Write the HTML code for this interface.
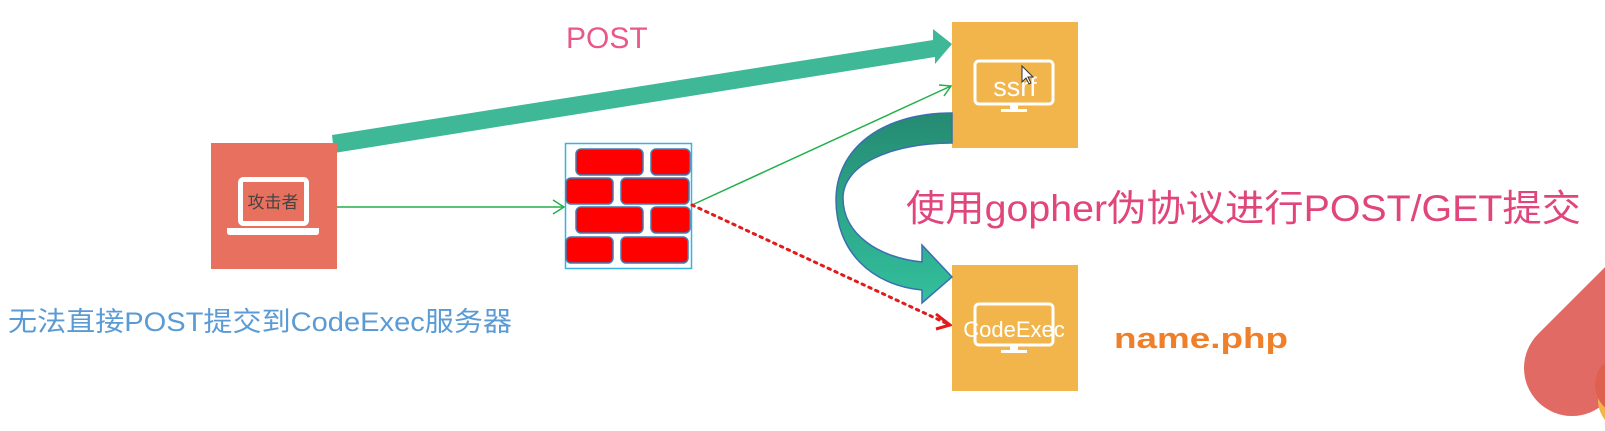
<!DOCTYPE html>
<html><head><meta charset="utf-8"><style>
html,body{margin:0;padding:0;background:#fff;width:1605px;height:431px;overflow:hidden}
text{font-family:"Liberation Sans","Noto Sans CJK SC",sans-serif}
</style></head><body>
<svg width="1605" height="431" viewBox="0 0 1605 431" xmlns="http://www.w3.org/2000/svg">
<defs>
<linearGradient id="cg" x1="0" y1="0" x2="0" y2="1">
<stop offset="0" stop-color="#258a72"/><stop offset="1" stop-color="#33c09d"/>
</linearGradient>
</defs>
<!-- bottom right decoration -->
<g transform="translate(1572,368) rotate(-45)">
<rect x="-48" y="-48" width="260" height="96" rx="48" fill="#e26a64"/>
</g>
<circle cx="1630" cy="400" r="32" fill="#f2b54b"/>
<circle cx="1625" cy="385" r="30" fill="#e0604f"/>

<!-- thick arrow -->
<polygon points="332,135 933,40 933,29 952,44 935,64 935,57 334,153" fill="#3fb897"/>

<!-- attacker -->
<rect x="211" y="143" width="126" height="126" fill="#e8705f"/>
<rect x="240.5" y="179.5" width="66" height="44" rx="3" fill="none" stroke="#fff" stroke-width="5"/>
<path d="M227 228 H319 V232 Q319 235 316 235 H230 Q227 235 227 232 Z" fill="#fff"/>
<text x="273" y="208" font-size="17" fill="#444" text-anchor="middle">攻击者</text>

<!-- green line -->
<line x1="337" y1="207" x2="564" y2="207" stroke="#22b04a" stroke-width="1.5"/>
<polyline points="553,200 564,207 553,214" fill="none" stroke="#22b04a" stroke-width="1.5"/>

<!-- wall -->
<rect x="565.5" y="143.5" width="126" height="125" fill="#fff" stroke="#36b2e3" stroke-width="1.5"/>
<g fill="#ff0000" stroke="#3f7db5" stroke-width="1.5">
<rect x="576" y="149" width="67" height="26" rx="5"/><rect x="651" y="149" width="39" height="26" rx="5"/>
<rect x="566" y="178" width="47" height="26" rx="5"/><rect x="621" y="178" width="68" height="26" rx="5"/>
<rect x="576" y="207" width="67" height="26" rx="5"/><rect x="651" y="207" width="39" height="26" rx="5"/>
<rect x="566" y="237" width="47" height="26" rx="5"/><rect x="621" y="237" width="67" height="26" rx="5"/>
</g>

<!-- thin green to ssrf -->
<line x1="692" y1="205" x2="951" y2="86" stroke="#22b04a" stroke-width="1.5"/>
<polyline points="939,85 951,86 944,96" fill="none" stroke="#22b04a" stroke-width="1.5"/>
<!-- red dotted -->
<line x1="692" y1="205" x2="948" y2="324" stroke="#e01b1b" stroke-width="3" stroke-dasharray="2.5,5" stroke-linecap="round"/>
<polyline points="936,314 950,325 936,329" fill="none" stroke="#e01b1b" stroke-width="3"/>

<!-- ssrf box -->
<rect x="952" y="22" width="126" height="126" fill="#f2b54b"/>
<rect x="975" y="61" width="78" height="43" rx="4" fill="none" stroke="#fff" stroke-width="3"/>
<rect x="1010" y="104" width="8" height="5" fill="#fff"/>
<rect x="1001" y="109" width="26" height="3" fill="#fff"/>
<text x="1015" y="96" font-size="27" fill="#fff" text-anchor="middle">ssrf</text>
<path d="M1022 66 L1022 82 L1026 78 L1029 84 L1031 83 L1028 77 L1033 77 Z" fill="#fff" stroke="#333" stroke-width="1"/>

<!-- CodeExec box -->
<rect x="952" y="265" width="126" height="126" fill="#f2b54b"/>
<rect x="975" y="304" width="78" height="41" rx="4" fill="none" stroke="#fff" stroke-width="3"/>
<rect x="1010" y="345" width="8" height="5" fill="#fff"/>
<rect x="1001" y="350" width="26" height="3" fill="#fff"/>
<text x="1014" y="337" font-size="22" fill="#fff" text-anchor="middle">CodeExec</text>

<!-- curved arrow -->
<path d="M952,113 C880,113 836,150 836,200 C836,250 870,285 922,290 L922,303 L952,277 L922,245 L922,262 C880,258 843,235 843,198 C843,165 890,143 952,143 Z" fill="url(#cg)" stroke="#3a6fb0" stroke-width="1.5"/>

<!-- texts -->
<text x="566" y="48" font-size="30" fill="#e8588a">POST</text>
<text x="906" y="221" font-size="37" fill="#e0457b" textLength="675" lengthAdjust="spacingAndGlyphs">使用gopher伪协议进行POST/GET提交</text>
<text x="1114" y="348" font-size="29" font-weight="bold" fill="#f07f2a" textLength="174" lengthAdjust="spacingAndGlyphs">name.php</text>
<text x="8" y="331" font-size="27" fill="#5b9bd5" textLength="504" lengthAdjust="spacingAndGlyphs">无法直接POST提交到CodeExec服务器</text>
</svg>
</body></html>
